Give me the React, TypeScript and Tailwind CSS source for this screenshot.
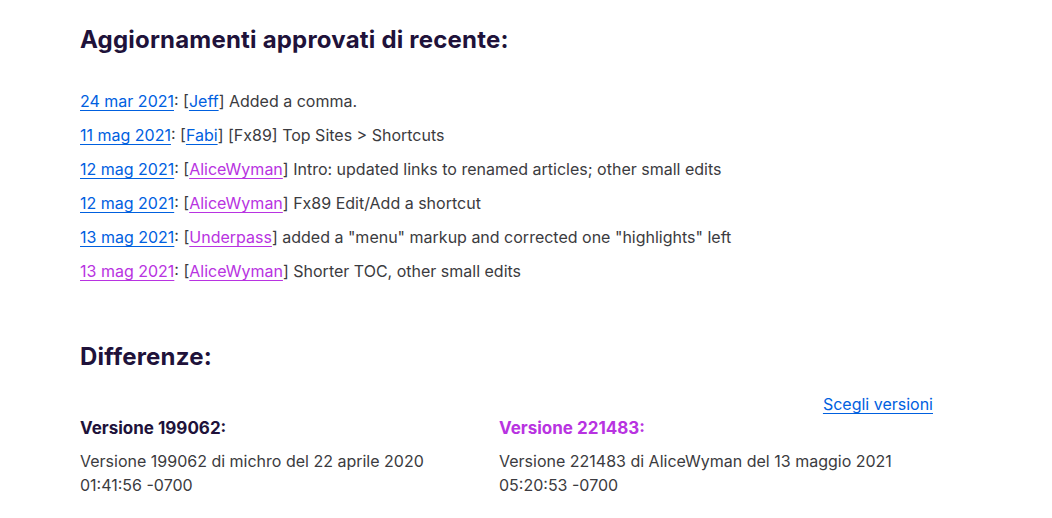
const LINK = "text-[#0060df] underline underline-offset-[3px] decoration-1";
const VISITED = "text-[#b833e1] underline underline-offset-[3px] decoration-1";

interface Revision {
  date: string;
  dateVisited?: boolean;
  user: string;
  userVisited?: boolean;
  note: string;
}

const REVISIONS: Revision[] = [
  { date: "24 mar 2021", user: "Jeff", note: "Added a comma." },
  { date: "11 mag 2021", user: "Fabi", note: "[Fx89] Top Sites > Shortcuts" },
  { date: "12 mag 2021", user: "AliceWyman", userVisited: true, note: "Intro: updated links to renamed articles; other small edits" },
  { date: "12 mag 2021", user: "AliceWyman", userVisited: true, note: "Fx89 Edit/Add a shortcut" },
  { date: "13 mag 2021", user: "Underpass", userVisited: true, note: 'added a "menu" markup and corrected one "highlights" left' },
  { date: "13 mag 2021", dateVisited: true, user: "AliceWyman", userVisited: true, note: "Shorter TOC, other small edits" },
];

export default function App() {
  return (
    <div
      className="min-h-screen bg-white text-[#3b3b40]"
      style={{ fontFamily: "Inter, 'Noto Sans', sans-serif" }}
    >
      <div className="w-[933px] pl-20 pt-[25px]">
        <h2 className="text-[24px] font-bold leading-[30px] tracking-[0.2px] text-[#20123a]">
          Aggiornamenti approvati di recente:
        </h2>

        <ul className="mt-[34px] flex flex-col gap-[10px] text-[16px] leading-6">
          {REVISIONS.map((r, i) => (
            <li key={i}>
              <a href="#" className={r.dateVisited ? VISITED : LINK}>{r.date}</a>
              : [<a href="#" className={r.userVisited ? VISITED : LINK}>{r.user}</a>] {r.note}
            </li>
          ))}
        </ul>

        <h2 className="mt-[59px] text-[24px] font-bold leading-[30px] tracking-[0.2px] text-[#20123a]">
          Differenze:
        </h2>

        <div className="mt-[20px] flex justify-end">
          <a href="#" className={`${LINK} text-[16px] leading-6`}>Scegli versioni</a>
        </div>

        <div className="grid grid-cols-[399px_1fr] gap-x-5">
          <div>
            <h3 className="text-[17px] font-bold leading-6 text-[#20123a]">Versione 199062:</h3>
            <p className="mt-[9px] text-[16px] leading-6">
              Versione 199062 di michro del 22 aprile 2020 01:41:56 -0700
            </p>
          </div>
          <div>
            <h3 className="text-[17px] font-bold leading-6 text-[#b833e1]">Versione 221483:</h3>
            <p className="mt-[9px] text-[16px] leading-6">
              Versione 221483 di AliceWyman del 13 maggio 2021 05:20:53 -0700
            </p>
          </div>
        </div>
      </div>
    </div>
  );
}
